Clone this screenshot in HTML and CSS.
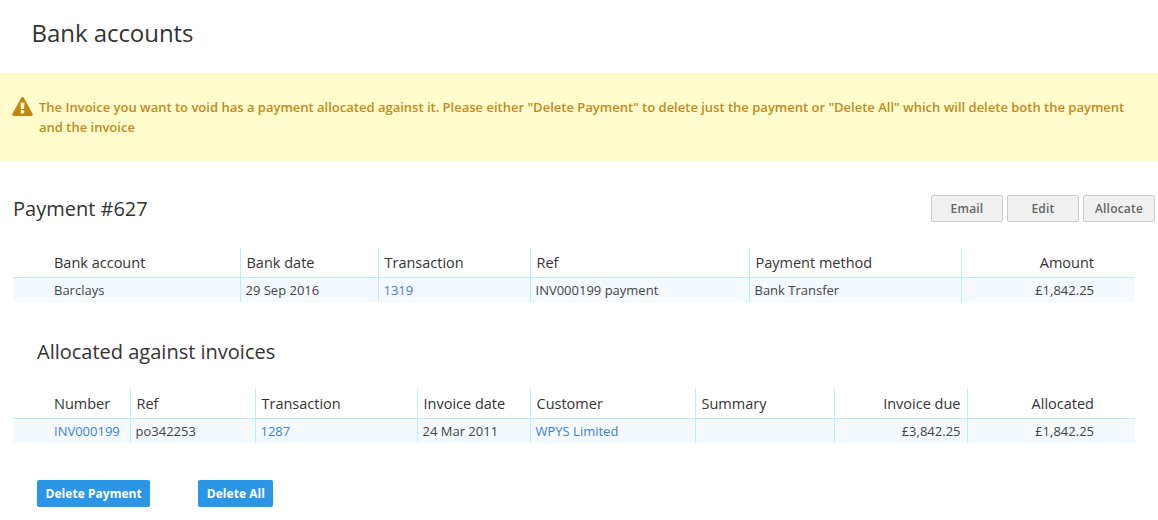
FILE: index.html
```html
<!DOCTYPE html>
<html>
<head>
<meta charset="utf-8">
<link rel="stylesheet" href="styles.css">
<title>Bank accounts</title>
</head>
<body>
<h1 class="page-title">Bank accounts</h1>

<div class="alert">
	<svg class="alert-icon" width="21" height="19" viewBox="0 0 21 19">
		<path fill="#c08510" fill-rule="evenodd" d="M10.5 0c.6 0 1.1.3 1.4.9l8.7 15.8c.6 1.1 0 2.3-1.3 2.3H1.7C.4 19-.2 17.800.4 16.700L9.100.9c.3-.6.8-.9 1.400-.9zM8.500 5.500l.4 6.500h3.200l.4-6.500zM8.800 13.200v3.300h3.400v-3.300z"/>
	</svg>
	<p class="alert-text">The Invoice you want to void has a payment allocated against it. Please either "Delete Payment" to delete just the payment or "Delete All" which will delete both the payment and the invoice</p>
</div>

<div class="payment-head">
	<h2 class="payment-title">Payment #627</h2>
	<div class="actions">
		<a class="btn">Email</a>
		<a class="btn">Edit</a>
		<a class="btn">Allocate</a>
	</div>
</div>

<table class="data payment-table">
	<colgroup>
		<col class="w227"><col class="w138"><col class="w152"><col class="w219"><col class="w212"><col>
	</colgroup>
	<tr>
		<th>Bank account</th>
		<th>Bank date</th>
		<th>Transaction</th>
		<th>Ref</th>
		<th>Payment method</th>
		<th class="num">Amount</th>
	</tr>
	<tr>
		<td>Barclays</td>
		<td>29 Sep 2016</td>
		<td><a>1319</a></td>
		<td>INV000199 payment</td>
		<td>Bank Transfer</td>
		<td class="num">£1,842.25</td>
	</tr>
</table>

<h2 class="sub-title">Allocated against invoices</h2>

<table class="data">
	<colgroup>
		<col class="w117"><col class="w125"><col class="w162"><col class="w113"><col class="w165"><col class="w139"><col class="w133"><col>
	</colgroup>
	<tr>
		<th>Number</th>
		<th>Ref</th>
		<th>Transaction</th>
		<th>Invoice date</th>
		<th>Customer</th>
		<th>Summary</th>
		<th class="num lastless">Invoice due</th>
		<th class="num">Allocated</th>
	</tr>
	<tr>
		<td><a>INV000199</a></td>
		<td>po342253</td>
		<td><a>1287</a></td>
		<td>24 Mar 2011</td>
		<td><a>WPYS Limited</a></td>
		<td></td>
		<td class="num lastless">£3,842.25</td>
		<td class="num">£1,842.25</td>
	</tr>
</table>

<div class="bottom-actions">
	<a class="btn-blue">Delete Payment</a>
	<a class="btn-blue">Delete All</a>
</div>
</body>
</html>
```

FILE: styles.css
```css
body{margin:0; background:#fff; color:#333; font-family:"Open Sans","Liberation Sans",sans-serif; font-size:13px;}

.page-title{margin:0; padding:16px 32px 0 31.5px; height:57px; font-size:24px; line-height:34px; font-weight:400; color:#333; letter-spacing:-.05px;}

.alert{display:flex; align-items:flex-start; height:88px; box-sizing:border-box; padding:24px 13px 0; background:#fffccc; color:#c08a1e;}
.alert-icon{flex:none; margin:0 6px 0 -1px;}
.alert-text{margin:0; font-size:13px; line-height:20px; font-weight:600;}

.payment-head{display:flex; justify-content:space-between; align-items:center; margin:34px 3px 0 13px; height:28px;}
.payment-title{margin:0; font-size:20px; line-height:28px; font-weight:400; color:#333;}
.actions{display:flex; gap:4px; margin-top:-1px;}
.btn{display:block; width:70px; height:25px; line-height:25px; text-align:center; background:#f0f0f0; border:1px solid #ccc; border-radius:2px; font-size:12px; font-weight:600; color:#666; letter-spacing:.2px;}

.data{width:1122px; margin:0 0 0 13px; border-collapse:collapse; table-layout:fixed;}
.payment-table{margin-top:25px;}
.data th{height:29px; padding:0 5px 0 6px; text-align:left; font-size:14.5px; font-weight:400; color:#333; border-left:1px solid #bfeaff; border-bottom:1px solid #bfeaff;}
.data td{height:24px; padding:0 5px; background:#f3f9fc; font-size:13px; color:#444; border-left:1px solid #bfeaff;}
.data th:first-child,.data td:first-child{padding-left:41px; border-left:0;}
.data .num{text-align:right; padding-right:41px;}
.data .lastless{padding-right:6px;}
.data a{color:#3b7fd6;}

.w117{width:117px} .w125{width:125px} .w162{width:162px} .w113{width:113px} .w165{width:165px}
.w139{width:139px} .w133{width:133px} .w227{width:227px} .w138{width:138px} .w152{width:152px}
.w219{width:219px} .w212{width:212px}

.sub-title{margin:36px 0 23px 37px; font-size:20px; line-height:28px; font-weight:400; color:#333;}

.bottom-actions{display:flex; gap:48px; margin:37px 0 0 37px;}
.btn-blue{display:block; height:27px; line-height:27px; padding:0 8.5px; background:#2b96e8; border-radius:2px; color:#fff; font-size:12px; font-weight:700; letter-spacing:.04px;}
```
